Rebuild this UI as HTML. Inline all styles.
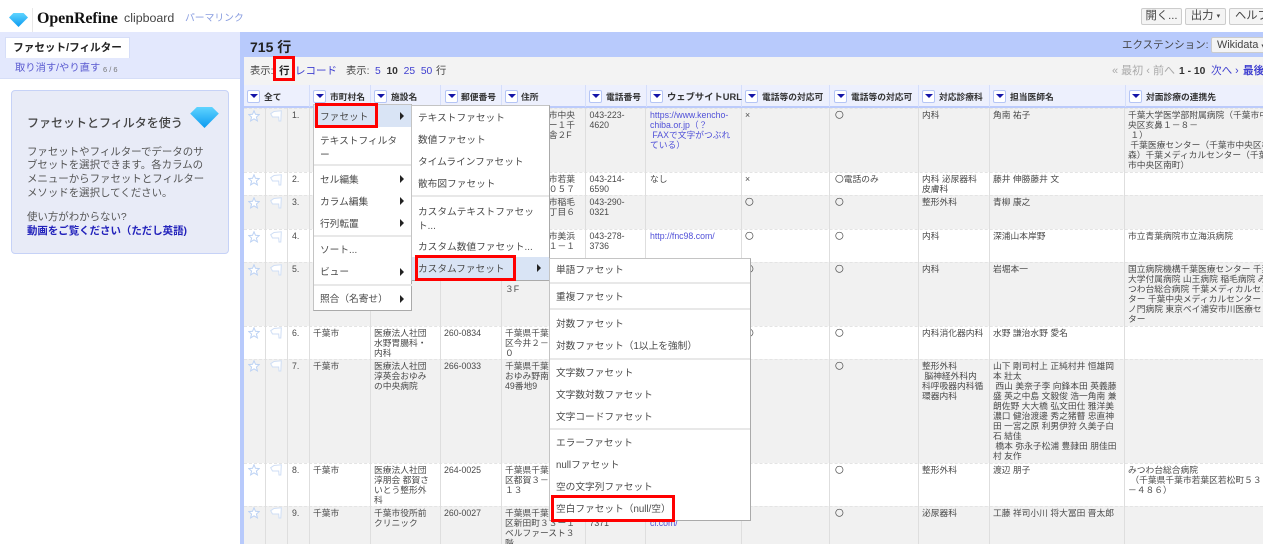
<!DOCTYPE html>
<html lang="ja"><head><meta charset="utf-8"><title>OpenRefine</title>
<style>
html,body{margin:0;padding:0;background:#fff}
body{width:1263px;height:544px;overflow:hidden;position:relative;font-family:"Liberation Sans","Noto Sans CJK JP",sans-serif;color:#333}
#w{position:absolute;left:0;top:0;width:1263px;height:544px;overflow:hidden;filter:blur(.35px)}
.a{position:absolute;white-space:nowrap}
.l{color:#4040d0}
.r{position:absolute;left:244px;width:1019px;border-top:1px dashed #e4e4e4;box-sizing:border-box}
.o{background:#f1f1f1}.e{background:#fff}
.r span{position:absolute;top:1px;font-size:8.75px;line-height:10px;white-space:nowrap;color:#4a4a4a}
.n{left:48px}.c1{left:69px}.c2{left:130px}.c3{left:200px}.c4{left:261px}.c5{left:345.5px}.c6{left:406px}.c7{left:501px}.c8{left:591px}.c9{left:678px}.c10{left:749px}.c11{left:884px}
.v{position:absolute;top:85px;width:1px;height:459px;background:#dedede}
.hd{position:absolute;top:85px;left:244px;width:1019px;height:23px;background:#edf0fd;border-bottom:2px solid #bccbfb;box-sizing:border-box}
.hv{position:absolute;top:85px;width:1px;height:22px;background:#d5defa}
.b{position:absolute;top:90px;width:11px;height:11px;border:1px solid #b5c5f5;border-radius:2px;background:#fff}
.b:after{content:"";position:absolute;left:1.5px;top:3px;border-left:4px solid transparent;border-right:4px solid transparent;border-top:4.5px solid #1414a8}
.h{position:absolute;top:92px;font-size:8.75px;font-weight:bold;line-height:11px;white-space:nowrap;color:#333}
.m{position:absolute;background:#fff;border:1px solid #c4c4c4;border-right-color:#aaa;border-bottom-color:#aaa;box-sizing:border-box}
.i{position:absolute;font-size:9.7px;line-height:12px;white-space:nowrap;color:#4a4a4a;margin-top:2px}
.s{position:absolute;height:2px;background:#e8e8e8}
.ar{position:absolute;width:0;height:0;border-top:4px solid transparent;border-bottom:4px solid transparent;border-left:4px solid #222}
.red{position:absolute;border:3px solid #f00;box-sizing:border-box}
.btn{position:absolute;background:#f4f4f4;border:1px solid #ccc;border-radius:2px;box-sizing:border-box;font-size:11.3px;color:#444;line-height:15px;text-align:center;white-space:nowrap;overflow:hidden}
</style></head><body>
<svg width="0" height="0" style="position:absolute">
<defs>
<linearGradient id="g" x1="0" y1="0" x2="0" y2="1"><stop offset="0" stop-color="#5fd4ff"/><stop offset="1" stop-color="#0b9af0"/></linearGradient>
<symbol id="dia" viewBox="0 0 30 22"><path d="M7 0H23L30 7 15 22 0 7Z" fill="url(#g)"/></symbol>
<symbol id="star" viewBox="0 0 12 12"><path d="M6 .8 7.5 4.3 11.3 4.6 8.4 7 9.4 10.9 6 8.8 2.6 10.9 3.6 7 .7 4.6 4.5 4.3Z" fill="#fff" stroke="#bcd2f4" stroke-width="1"/></symbol>
<symbol id="flag" viewBox="0 0 12 12"><path d="M.7 3.7 4 1.5 11.3.8 10.8 11 9 11 8.7 7 2.5 7Z" fill="#fff" stroke="#cfdef5" stroke-width="1"/></symbol>
</defs></svg>
<div id="w">
<!-- top bar -->
<svg class="a" style="left:9px;top:13px" width="19" height="14"><use href="#dia" width="19" height="14"/></svg>
<div class="a" style="left:32px;top:8px;width:1px;height:24px;background:#e8e8e8"></div>
<div class="a" style="left:37px;top:9px;font:bold 16px/20px 'Liberation Serif',serif;color:#111;letter-spacing:-.1px">OpenRefine</div>
<div class="a" style="left:124px;top:11px;font-size:12.4px;line-height:15px;color:#444">clipboard</div>
<div class="a" style="left:185px;top:12px;font-size:9.8px;line-height:14px;color:#8a9ee0">パーマリンク</div>
<div class="btn" style="left:1141px;top:8px;width:41px;height:17px">開く...</div>
<div class="btn" style="left:1185px;top:8px;width:41px;height:17px">出力 <span style="font-size:7px;vertical-align:1px">▾</span></div>
<div class="btn" style="left:1229px;top:8px;width:50px;height:17px;text-align:left;padding-left:5px">ヘルプ</div>

<!-- left panel -->
<div class="a" style="left:0;top:32px;width:240px;height:47px;background:#e3e8fd;border-bottom:1px solid #d6def8;box-sizing:border-box"></div>
<div class="a" style="left:5px;top:37px;width:125px;height:21px;background:#fff;border:1px solid #d6def8;border-bottom:none;box-sizing:border-box;font-weight:bold;font-size:10.6px;line-height:20px;text-align:center;color:#222">ファセット/フィルター</div>
<div class="a l" style="left:15px;top:62px;font-size:10.3px;line-height:14px;color:#5a5ad0">取り消す/やり直す</div>
<div class="a" style="left:103px;top:64px;font-size:7.5px;line-height:11px;color:#777">6 / 6</div>
<div class="a" style="left:11px;top:90px;width:218px;height:164px;background:#e8ebf7;border:1px solid #c6d2f7;border-radius:4px;box-sizing:border-box"></div>
<div class="a" style="left:27px;top:114px;font-size:12px;line-height:18px;color:#444;font-weight:500">ファセットとフィルタを使う</div>
<svg class="a" style="left:190px;top:107px" width="29" height="21"><use href="#dia" width="29" height="21"/></svg>
<div class="a" style="left:27px;top:145.5px;font-size:10.45px;line-height:13.7px;color:#555">ファセットやフィルターでデータのサ<br>ブセットを選択できます。各カラムの<br>メニューからファセットとフィルター<br>メソッドを選択してください。</div>
<div class="a" style="left:27px;top:211px;font-size:10.45px;line-height:13.5px;color:#555">使い方がわからない?</div>
<div class="a" style="left:27px;top:224.5px;font-size:10.45px;line-height:14px;font-weight:bold;color:#2222bb">動画をご覧ください（ただし英語)</div>

<!-- right header -->
<div class="a" style="left:240px;top:32px;width:1023px;height:25px;background:#b8cafc"></div>
<div class="a" style="left:240px;top:32px;width:4px;height:512px;background:#b8cafc"></div>
<div class="a" style="left:244px;top:57px;width:1019px;height:28px;background:#f3f3f3"></div>
<div class="a" style="left:250px;top:38px;font-size:14px;font-weight:bold;line-height:18px;color:#222">715 行</div>
<div class="a" style="left:1122px;top:38px;font-size:10.5px;line-height:15px;color:#444">エクステンション:</div>
<div class="btn" style="left:1211px;top:37px;width:60px;height:16px;font-size:10.8px;line-height:14px;text-align:left;padding-left:5px">Wikidata <span style="font-size:7px">▾</span></div>
<div class="a" style="left:250px;top:64px;font-size:10.3px;line-height:15px;color:#444">表示:</div>
<div class="a" style="left:279px;top:64px;font-size:10.5px;font-weight:bold;line-height:15px;color:#222">行</div>
<div class="a l" style="left:295px;top:64px;font-size:10.5px;line-height:15px">レコード</div>
<div class="a" style="left:346px;top:64px;font-size:10.3px;line-height:15px;color:#444">表示:</div>
<div class="a" style="left:375px;top:64px;font-size:10.3px;line-height:15px;color:#4040d0">5&nbsp; <b style="color:#333">10</b>&nbsp; 25&nbsp; 50</div>
<div class="a" style="left:436px;top:64px;font-size:10.3px;line-height:15px;color:#444">行</div>
<div class="a" style="left:1112px;top:64px;font-size:11px;line-height:15px;color:#aaa">« 最初 ‹ 前へ</div>
<div class="a" style="left:1179px;top:64px;font-size:10.3px;font-weight:bold;line-height:15px;color:#333">1 - 10</div>
<div class="a l" style="left:1211px;top:64px;font-size:10.6px;line-height:15px">次へ ›</div>
<div class="a l" style="left:1243px;top:64px;font-size:10.6px;line-height:15px;font-weight:bold">最後</div>

<!-- rows -->
<div class="r o" style="top:108px;height:64px"><span class="n">1.</span><span class="c3"></span><span class="c4">千葉県千葉市中央<br>区亥鼻町１ー１千<br>葉中央ビル舎２F</span><span class="c5">043-223-<br>4620</span><span class="c6" style="color:#5050d8">https://www.kencho-<br>chiba.or.jp（？<br>&nbsp;FAXで文字がつぶれ<br>ている）</span><span class="c7">×</span><span class="c8">〇</span><span class="c9">内科</span><span class="c10">角南 祐子</span><span class="c11">千葉大学医学部附属病院（千葉市中<br>央区亥鼻１－８－<br>&nbsp;１）<br>&nbsp;千葉医療センター（千葉市中央区椿<br>森）千葉メディカルセンター（千葉<br>市中央区南町）</span></div>
<div class="r e" style="top:172px;height:23px"><span class="n">2.</span><span class="c4">千葉県千葉市若葉<br>区若松町１０５７</span><span class="c5">043-214-<br>6590</span><span class="c6">なし</span><span class="c7">×</span><span class="c8">〇電話のみ</span><span class="c9">内科 泌尿器科<br>皮膚科</span><span class="c10">藤井 伸勝藤井 文</span></div>
<div class="r o" style="top:195px;height:34px"><span class="n">3.</span><span class="c4">千葉県千葉市稲毛<br>区小仲台６丁目６</span><span class="c5">043-290-<br>0321</span><span class="c7">〇</span><span class="c8">〇</span><span class="c9">整形外科</span><span class="c10">青柳 康之</span></div>
<div class="r e" style="top:229px;height:33px"><span class="n">4.</span><span class="c4">千葉県千葉市美浜<br>区高洲三丁１－１</span><span class="c5">043-278-<br>3736</span><span class="c6" style="color:#5050d8">http://fnc98.com/</span><span class="c7">〇</span><span class="c8">〇</span><span class="c9">内科</span><span class="c10">深浦山本岸野</span><span class="c11">市立青葉病院市立海浜病院</span></div>
<div class="r o" style="top:262px;height:64px"><span class="n">5.</span><span class="c4"><br><br>３F</span><span class="c7">〇</span><span class="c8">〇</span><span class="c9">内科</span><span class="c10">岩堀本一</span><span class="c11">国立病院機構千葉医療センター 千葉<br>大学付属病院 山王病院 稲毛病院 み<br>つわ台総合病院 千葉メディカルセン<br>ター 千葉中央メディカルセンター 虎<br>ノ門病院 東京ベイ浦安市川医療セン<br>ター</span></div>
<div class="r e" style="top:326px;height:33px"><span class="n">6.</span><span class="c1">千葉市</span><span class="c2">医療法人社団<br>水野胃腸科・<br>内科</span><span class="c3">260-0834</span><span class="c4">千葉県千葉市中央<br>区今井２－<br>０</span><span class="c7">〇</span><span class="c8">〇</span><span class="c9">内科消化器内科</span><span class="c10">水野 謙治水野 愛名</span></div>
<div class="r o" style="top:359px;height:104px"><span class="n">7.</span><span class="c1">千葉市</span><span class="c2">医療法人社団<br>淳英会おゆみ<br>の中央病院</span><span class="c3">266-0033</span><span class="c4">千葉県千葉市緑区<br>おゆみ野南<br>49番地9</span><span class="c8">〇</span><span class="c9">整形外科<br>&nbsp;脳神経外科内<br>科呼吸器内科循<br>環器内科</span><span class="c10">山下 剛司村上 正純村井 恒雄岡<br>本 壯太<br>&nbsp;西山 美奈子李 向鋒本田 英義藤<br>盛 英之中島 文毅俊 浩一角南 兼<br>朗佐野 大大橋 弘文田仕 雅洋美<br>濃口 健治渡邊 秀之猪瞽 忠直神<br>田 一宮之原 利男伊狩 久美子白<br>石 結佳<br>&nbsp;橋本 弥永子松浦 豊隷田 朋佳田<br>村 友作</span></div>
<div class="r e" style="top:463px;height:43px"><span class="n">8.</span><span class="c1">千葉市</span><span class="c2">医療法人社団<br>淳朋会 都賀さ<br>いとう整形外<br>科</span><span class="c3">264-0025</span><span class="c4">千葉県千葉市若葉<br>区都賀３－<br>１３</span><span class="c8">〇</span><span class="c9">整形外科</span><span class="c10">渡辺 朋子</span><span class="c11">みつわ台総合病院<br>&nbsp;（千葉県千葉市若葉区若松町５３<br>－４８６）</span></div>
<div class="r o" style="top:506px;height:38px"><span class="n">9.</span><span class="c1">千葉市</span><span class="c2">千葉市役所前<br>クリニック</span><span class="c3">260-0027</span><span class="c4">千葉県千葉市中央<br>区新田町３３ー１<br>ベルファースト３<br>階</span><span class="c5">043-227-<br>7371</span><span class="c6" style="color:#5050d8">https://www.chiba-<br>cl.com/</span><span class="c8">〇</span><span class="c9">泌尿器科</span><span class="c10">工藤 祥司小川 将大冨田 晋太郎</span></div>

<!-- column lines -->
<div class="v" style="left:265px"></div><div class="v" style="left:287px"></div><div class="v" style="left:309px"></div><div class="v" style="left:370px"></div><div class="v" style="left:440px"></div><div class="v" style="left:501px"></div><div class="v" style="left:585px"></div><div class="v" style="left:645px"></div><div class="v" style="left:741px"></div><div class="v" style="left:829px"></div><div class="v" style="left:918px"></div><div class="v" style="left:989px"></div><div class="v" style="left:1124px"></div>

<!-- icons -->
<svg class="a" style="left:248px;top:110px" width="36" height="12"><use href="#star" width="12" height="12"/><use href="#flag" x="22" width="12" height="12"/></svg>
<svg class="a" style="left:248px;top:174px" width="36" height="12"><use href="#star" width="12" height="12"/><use href="#flag" x="22" width="12" height="12"/></svg>
<svg class="a" style="left:248px;top:197px" width="36" height="12"><use href="#star" width="12" height="12"/><use href="#flag" x="22" width="12" height="12"/></svg>
<svg class="a" style="left:248px;top:231px" width="36" height="12"><use href="#star" width="12" height="12"/><use href="#flag" x="22" width="12" height="12"/></svg>
<svg class="a" style="left:248px;top:264px" width="36" height="12"><use href="#star" width="12" height="12"/><use href="#flag" x="22" width="12" height="12"/></svg>
<svg class="a" style="left:248px;top:327px" width="36" height="12"><use href="#star" width="12" height="12"/><use href="#flag" x="22" width="12" height="12"/></svg>
<svg class="a" style="left:248px;top:360px" width="36" height="12"><use href="#star" width="12" height="12"/><use href="#flag" x="22" width="12" height="12"/></svg>
<svg class="a" style="left:248px;top:464px" width="36" height="12"><use href="#star" width="12" height="12"/><use href="#flag" x="22" width="12" height="12"/></svg>
<svg class="a" style="left:248px;top:507px" width="36" height="12"><use href="#star" width="12" height="12"/><use href="#flag" x="22" width="12" height="12"/></svg>

<!-- header -->
<div class="hd"></div>
<div class="hv" style="left:309px"></div><div class="hv" style="left:370px"></div><div class="hv" style="left:440px"></div><div class="hv" style="left:501px"></div><div class="hv" style="left:585px"></div><div class="hv" style="left:646px"></div><div class="hv" style="left:741px"></div><div class="hv" style="left:829px"></div><div class="hv" style="left:918px"></div><div class="hv" style="left:989px"></div><div class="hv" style="left:1125px"></div>
<div class="b" style="left:247px"></div><div class="h" style="left:264px">全て</div>
<div class="b" style="left:313px"></div><div class="h" style="left:330px">市町村名</div>
<div class="b" style="left:374px"></div><div class="h" style="left:391px">施設名</div>
<div class="b" style="left:445px"></div><div class="h" style="left:461px">郵便番号</div>
<div class="b" style="left:505px"></div><div class="h" style="left:521px">住所</div>
<div class="b" style="left:589px"></div><div class="h" style="left:606px">電話番号</div>
<div class="b" style="left:650px"></div><div class="h" style="left:667px;font-size:9.3px">ウェブサイトURL</div>
<div class="b" style="left:745px"></div><div class="h" style="left:762px;width:66px;overflow:hidden">電話等の対応可（初診）</div>
<div class="b" style="left:834px"></div><div class="h" style="left:851px;width:66px;overflow:hidden">電話等の対応可（再診）</div>
<div class="b" style="left:922px"></div><div class="h" style="left:939px">対応診療科</div>
<div class="b" style="left:993px"></div><div class="h" style="left:1010px">担当医師名</div>
<div class="b" style="left:1129px"></div><div class="h" style="left:1146px">対面診療の連携先</div>

<!-- main menu -->
<div class="m" style="left:313px;top:104px;width:99px;height:207px"></div>
<div class="a" style="left:314px;top:105px;width:98px;height:22px;background:#d9e4f5"></div>
<div class="i" style="left:320px;top:110px">ファセット</div><div class="ar" style="left:400px;top:112px"></div>
<div class="i" style="left:320px;top:133px;line-height:14px">テキストフィルタ<br>ー</div>
<div class="s" style="left:314px;top:164px;width:98px"></div>
<div class="i" style="left:320px;top:173px">セル編集</div><div class="ar" style="left:400px;top:175px"></div>
<div class="i" style="left:320px;top:195px">カラム編集</div><div class="ar" style="left:400px;top:197px"></div>
<div class="i" style="left:320px;top:217px">行列転置</div><div class="ar" style="left:400px;top:219px"></div>
<div class="s" style="left:314px;top:235px;width:98px"></div>
<div class="i" style="left:320px;top:243px">ソート...</div>
<div class="i" style="left:320px;top:265px">ビュー</div><div class="ar" style="left:400px;top:268px"></div>
<div class="s" style="left:314px;top:284px;width:98px"></div>
<div class="i" style="left:320px;top:292px">照合（名寄せ）</div><div class="ar" style="left:400px;top:295px"></div>

<!-- sub menu -->
<div class="m" style="left:411px;top:105px;width:139px;height:176px"></div>
<div class="i" style="left:418px;top:111px">テキストファセット</div>
<div class="i" style="left:418px;top:133px">数値ファセット</div>
<div class="i" style="left:418px;top:155px">タイムラインファセット</div>
<div class="i" style="left:418px;top:177px">散布図ファセット</div>
<div class="s" style="left:412px;top:195px;width:137px"></div>
<div class="i" style="left:418px;top:204px;line-height:14px">カスタムテキストファセッ<br>ト...</div>
<div class="i" style="left:418px;top:240px">カスタム数値ファセット...</div>
<div class="a" style="left:412px;top:257px;width:137px;height:23px;background:#d9e4f5"></div>
<div class="i" style="left:418px;top:262px">カスタムファセット</div><div class="ar" style="left:537px;top:264px"></div>

<!-- third menu -->
<div class="m" style="left:549px;top:258px;width:202px;height:263px"></div>
<div class="i" style="left:556px;top:263px">単語ファセット</div>
<div class="s" style="left:550px;top:282px;width:200px"></div>
<div class="i" style="left:556px;top:290px">重複ファセット</div>
<div class="s" style="left:550px;top:308px;width:200px"></div>
<div class="i" style="left:556px;top:317px">対数ファセット</div>
<div class="i" style="left:556px;top:339px">対数ファセット（1以上を強制）</div>
<div class="s" style="left:550px;top:358px;width:200px"></div>
<div class="i" style="left:556px;top:366px">文字数ファセット</div>
<div class="i" style="left:556px;top:388px">文字数対数ファセット</div>
<div class="i" style="left:556px;top:410px">文字コードファセット</div>
<div class="s" style="left:550px;top:428px;width:200px"></div>
<div class="i" style="left:556px;top:436px">エラーファセット</div>
<div class="i" style="left:556px;top:458px">nullファセット</div>
<div class="i" style="left:556px;top:480px">空の文字列ファセット</div>
<div class="i" style="left:556px;top:502px">空白ファセット（null/空）</div>
</div>

<!-- red boxes -->
<div class="red" style="left:273px;top:56px;width:22px;height:25px"></div>
<div class="red" style="left:315px;top:103px;width:63px;height:25px"></div>
<div class="red" style="left:415px;top:255px;width:101px;height:26px"></div>
<div class="red" style="left:551px;top:495px;width:124px;height:27px"></div>
</body></html>
